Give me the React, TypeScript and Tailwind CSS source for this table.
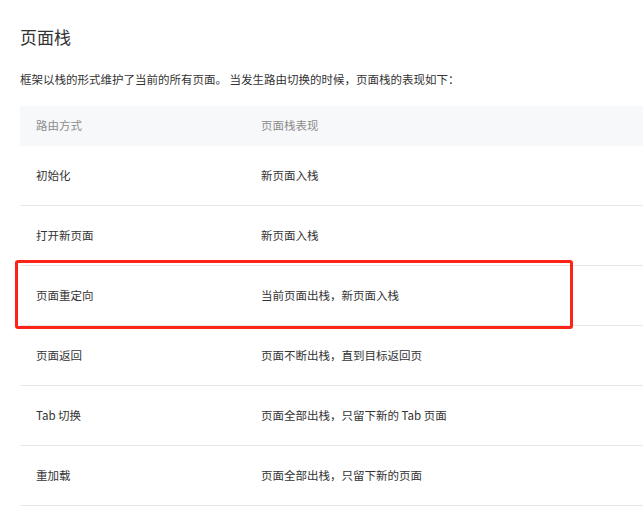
import React from 'react';

const rows = [
    ['初始化', '新页面入栈'],
    ['打开新页面', '新页面入栈'],
    ['页面重定向', '当前页面出栈，新页面入栈'],
    ['页面返回', '页面不断出栈，直到目标返回页'],
    ['Tab 切换', '页面全部出栈，只留下新的 Tab 页面'],
    ['重加载', '页面全部出栈，只留下新的页面'],
];

export default function App() {
    return (
        <div
            className="relative w-[643px] h-[522px] overflow-hidden bg-white pl-5 pt-[25px] text-[#333]"
            style={{ fontFamily: '"Noto Sans CJK SC", "Noto Sans", sans-serif' }}
        >
            <h2 className="text-[17px] leading-6 font-normal">页面栈</h2>
            <p className="mt-5 text-[11.5px] leading-5">
                框架以栈的形式维护了当前的所有页面。 当发生路由切换的时候，页面栈的表现如下：
            </p>

            <div className="mt-[17px] text-[11.5px]">
                <div className="flex h-10 items-center bg-[#f7f8fa] text-[#8c8c8c]">
                    <div className="w-[225px] pl-4">路由方式</div>
                    <div className="pl-4">页面栈表现</div>
                </div>
                {rows.map(([a, b]) => (
                    <div key={a} className="flex h-[60px] items-center border-b border-[#e8e8ea]">
                        <div className="w-[225px] pl-4">{a}</div>
                        <div className="pl-4">{b}</div>
                    </div>
                ))}
            </div>

            {/* highlight box */}
            <div className="absolute left-[15px] top-[260px] w-[558px] h-[69px] rounded-[3px] border-[3px] border-[#fd2316]" />
        </div>
    );
}
